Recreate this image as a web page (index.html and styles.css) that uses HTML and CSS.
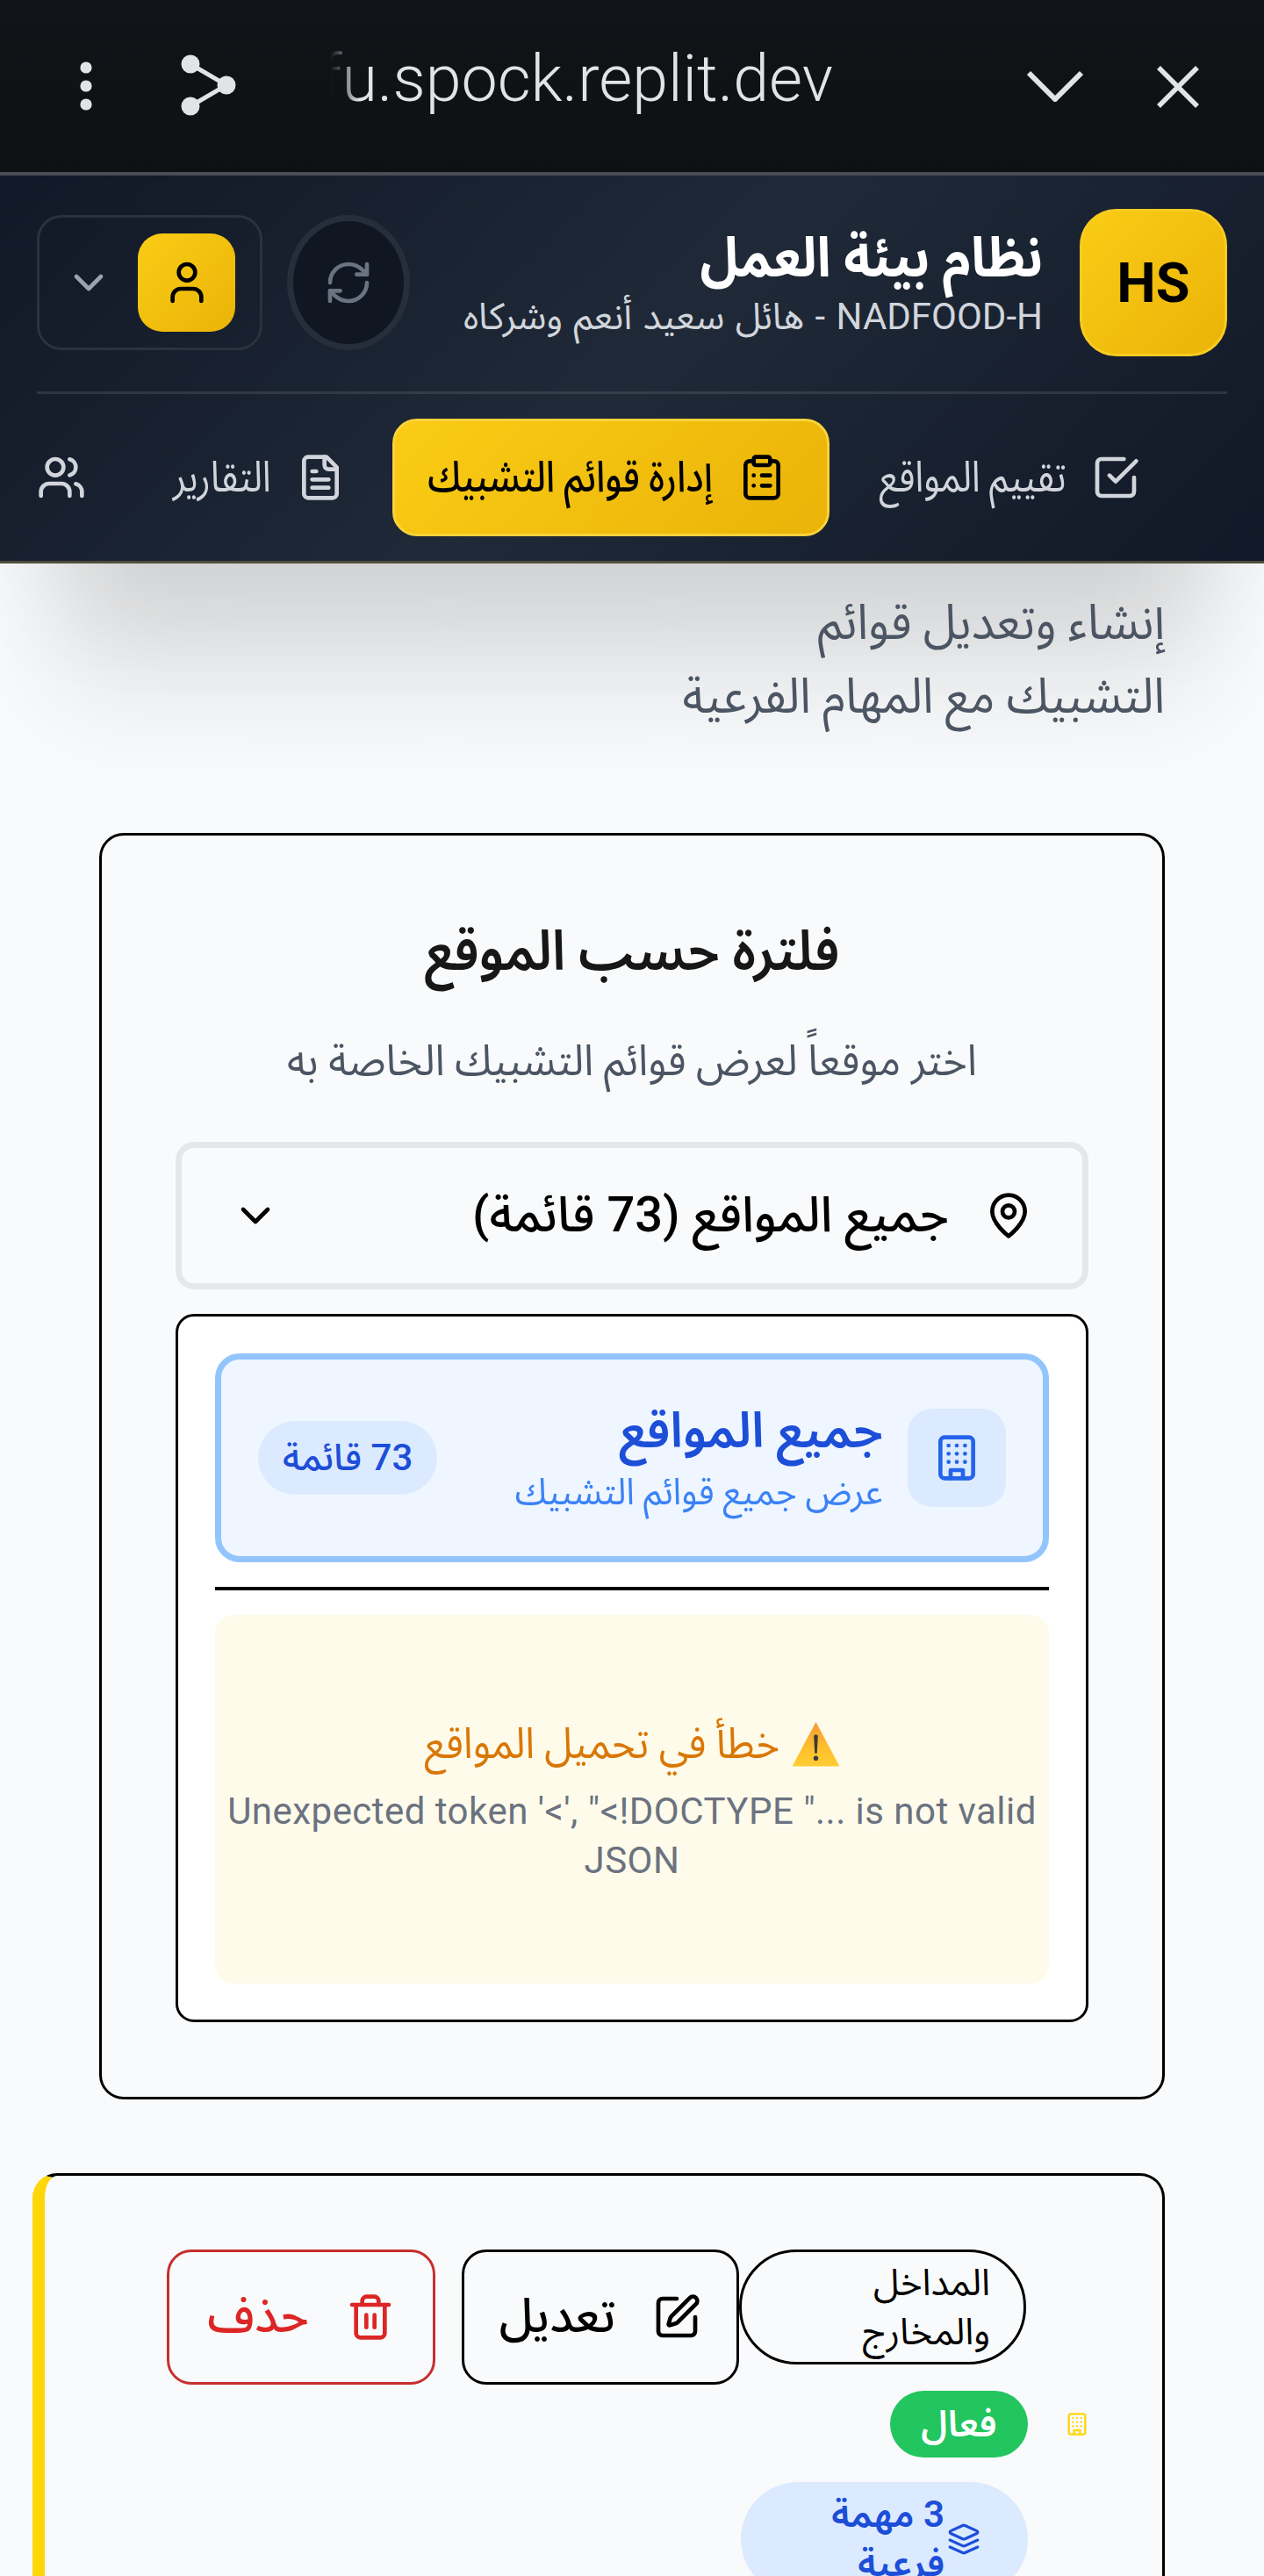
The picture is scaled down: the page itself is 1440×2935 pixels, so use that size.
FILE: index.html
```html
<!DOCTYPE html>
<html lang="ar" dir="rtl">
<head>
<meta charset="utf-8">
<title>نظام بيئة العمل</title>
<link rel="stylesheet" href="styles.css">
</head>
<body>
<div class="browser" dir="ltr">
  <div class="b-left">
    <svg class="kebab" viewBox="0 0 14 56" fill="#e1e3e6"><circle cx="7" cy="7" r="6.6"/><circle cx="7" cy="28" r="6.6"/><circle cx="7" cy="49" r="6.6"/></svg>
    <svg class="share" viewBox="0 0 64 72" fill="#e1e3e6" stroke="#e1e3e6"><line x1="12" y1="12" x2="53" y2="36" stroke-width="5"/><line x1="12" y1="60" x2="53" y2="36" stroke-width="5"/><circle cx="12" cy="12" r="10.5" stroke="none"/><circle cx="53" cy="36" r="10.5" stroke="none"/><circle cx="12" cy="60" r="10.5" stroke="none"/></svg>
    <div class="url"><span>fu.spock.replit.dev</span></div>
  </div>
  <div class="b-right">
    <svg class="b-chev" viewBox="0 0 64 36" fill="none" stroke="#e1e3e6" stroke-width="6"><path d="M2 3l30 30L62 3"/></svg>
    <svg class="b-x" viewBox="0 0 48 48" fill="none" stroke="#e1e3e6" stroke-width="5.5"><path d="M2 2l44 44M46 2L2 46"/></svg>
  </div>
</div>

<header class="hdr">
  <div class="hdr-top">
    <div class="brand">
      <div class="logo">HS</div>
      <div class="brand-text">
        <div class="brand-title">نظام بيئة العمل</div>
        <div class="brand-sub">NADFOOD-H - هائل سعيد أنعم وشركاه</div>
      </div>
    </div>
    <div class="tools">
      <div class="refresh">
        <svg class="ico" viewBox="0 0 24 24"><path d="M3 12a9 9 0 0 1 9-9 9.75 9.75 0 0 1 6.74 2.74L21 8"/><path d="M21 3v5h-5"/><path d="M21 12a9 9 0 0 1-9 9 9.75 9.75 0 0 1-6.74-2.74L3 16"/><path d="M8 16H3v5"/></svg>
      </div>
      <div class="profile">
        <div class="avatar"><svg class="ico" viewBox="0 0 24 24"><path d="M19 21v-2a4 4 0 0 0-4-4H9a4 4 0 0 0-4 4v2"/><circle cx="12" cy="7" r="4"/></svg></div>
        <svg class="ico prof-chev" viewBox="0 0 24 24"><path d="m6 9 6 6 6-6"/></svg>
      </div>
    </div>
  </div>
  <nav class="nav">
    <a class="nav-item w-sites"><svg class="ico" viewBox="0 0 24 24"><polyline points="9 11 12 14 22 4"/><path d="M21 12v7a2 2 0 0 1-2 2H5a2 2 0 0 1-2-2V5a2 2 0 0 1 2-2h11"/></svg><span>تقييم المواقع</span></a>
    <a class="nav-item w-lists active"><svg class="ico" viewBox="0 0 24 24"><rect width="8" height="4" x="8" y="2" rx="1" ry="1"/><path d="M16 4h2a2 2 0 0 1 2 2v14a2 2 0 0 1-2 2H6a2 2 0 0 1-2-2V6a2 2 0 0 1 2-2h2"/><path d="M12 11h4"/><path d="M12 16h4"/><path d="M8 11h.01"/><path d="M8 16h.01"/></svg><span>إدارة قوائم التشبيك</span></a>
    <a class="nav-item w-reports"><svg class="ico" viewBox="0 0 24 24"><path d="M15 2H6a2 2 0 0 0-2 2v16a2 2 0 0 0 2 2h12a2 2 0 0 0 2-2V7Z"/><path d="M14 2v4a2 2 0 0 0 2 2h4"/><path d="M10 9H8"/><path d="M16 13H8"/><path d="M16 17H8"/></svg><span>التقارير</span></a>
    <a class="nav-item"><svg class="ico" viewBox="0 0 24 24"><path d="M16 21v-2a4 4 0 0 0-4-4H6a4 4 0 0 0-4 4v2"/><circle cx="9" cy="7" r="4"/><path d="M22 21v-2a4 4 0 0 0-3-3.87"/><path d="M16 3.13a4 4 0 0 1 0 7.75"/></svg></a>
  </nav>
</header>

<main class="main">
  <p class="lead">إنشاء وتعديل قوائم<br>التشبيك مع المهام الفرعية</p>

  <section class="filter">
    <h2 class="filter-title">فلترة حسب الموقع</h2>
    <p class="filter-sub">اختر موقعاً لعرض قوائم التشبيك الخاصة به</p>
    <div class="select">
      <svg class="ico" viewBox="0 0 24 24"><path d="M20 10c0 6-8 12-8 12s-8-6-8-12a8 8 0 0 1 16 0Z"/><circle cx="12" cy="10" r="3"/></svg>
      <span class="select-text">جميع المواقع (73 قائمة)</span>
      <svg class="ico select-chev" viewBox="0 0 24 24"><path d="m6 9 6 6 6-6"/></svg>
    </div>
    <div class="drop">
      <div class="opt">
        <div class="opt-ico"><svg class="ico" viewBox="0 0 24 24"><rect width="16" height="20" x="4" y="2" rx="2" ry="2"/><path d="M9 22v-4h6v4"/><path d="M8 6h.01"/><path d="M16 6h.01"/><path d="M12 6h.01"/><path d="M12 10h.01"/><path d="M12 14h.01"/><path d="M16 10h.01"/><path d="M16 14h.01"/><path d="M8 10h.01"/><path d="M8 14h.01"/></svg></div>
        <div class="opt-text">
          <div class="opt-title">جميع المواقع</div>
          <div class="opt-sub">عرض جميع قوائم التشبيك</div>
        </div>
        <div class="opt-pill">73 قائمة</div>
      </div>
      <hr class="rule">
      <div class="err">
        <div class="err-title"><svg class="warn" viewBox="0 0 53 48" preserveAspectRatio="none"><defs><linearGradient id="wg" x1="0" y1="0" x2="0" y2="1"><stop offset="0" stop-color="#f59a35"/><stop offset=".6" stop-color="#ffc02c"/><stop offset="1" stop-color="#ffcd33"/></linearGradient></defs><path d="M26.5 1 52 46.500Q52.500 47.500 51 47.500H2Q.5 47.500 1 46.500Z" fill="url(#wg)"/><path d="M26.500 14q2.400 0 2.200 2.500L27.700 34h-2.400L24.300 16.500q-.2-2.500 2.200-2.500Z" fill="#3a3a3a"/><circle cx="26.500" cy="39" r="2.600" fill="#3a3a3a"/></svg><span>خطأ في تحميل المواقع</span></div>
        <div class="err-msg" dir="ltr">Unexpected token '&lt;', "&lt;!DOCTYPE "... is not valid JSON</div>
      </div>
    </div>
  </section>

  <section class="task">
    <div class="task-head">
      <div class="task-name">المداخل والمخارج</div>
      <button class="btn edit"><svg class="ico" viewBox="0 0 24 24"><path d="M12 3H5a2 2 0 0 0-2 2v14a2 2 0 0 0 2 2h14a2 2 0 0 0 2-2v-7"/><path d="M18.375 2.625a1 1 0 0 1 3 3l-9.013 9.014a2 2 0 0 1-.853.505l-2.873.84a.5.5 0 0 1-.62-.62l.84-2.873a2 2 0 0 1 .506-.852z"/></svg><span>تعديل</span></button>
      <button class="btn danger"><svg class="ico" viewBox="0 0 24 24"><path d="M3 6h18"/><path d="M19 6v14c0 1-1 2-2 2H7c-1 0-2-1-2-2V6"/><path d="M8 6V4c0-1 1-2 2-2h4c1 0 2 1 2 2v2"/><line x1="10" x2="10" y1="11" y2="17"/><line x1="14" x2="14" y1="11" y2="17"/></svg><span>حذف</span></button>
    </div>
    <div class="task-status">
      <svg class="ico tiny" viewBox="0 0 24 24"><rect width="16" height="20" x="4" y="2" rx="2" ry="2"/><path d="M9 22v-4h6v4"/><path d="M8 6h.01"/><path d="M16 6h.01"/><path d="M12 6h.01"/><path d="M12 10h.01"/><path d="M12 14h.01"/><path d="M16 10h.01"/><path d="M16 14h.01"/><path d="M8 10h.01"/><path d="M8 14h.01"/></svg>
      <span class="active-pill">فعال</span>
    </div>
    <div class="sub-pill">
      <svg class="ico layers" viewBox="0 0 24 24"><path d="m12.830 2.180a2 2 0 0 0-1.660 0L2.600 6.080a1 1 0 0 0 0 1.830l8.580 3.910a2 2 0 0 0 1.660 0l8.580-3.900a1 1 0 0 0 0-1.830Z"/><path d="m22 17.650-9.170 4.160a2 2 0 0 1-1.660 0L2 17.650"/><path d="m22 12.650-9.170 4.160a2 2 0 0 1-1.660 0L2 12.650"/></svg>
      <span>3 مهمة فرعية</span>
    </div>
  </section>
</main>
</body>
</html>
```
FILE: styles.css
```css
* { box-sizing: border-box; }
html, body { margin: 0; height: 2935px; overflow: hidden; }
body { background: #f9fafb; font-family: Roboto, "Noto Sans Arabic", "Noto Sans", sans-serif; color: #000; }
p, h2 { margin: 0; }

.ico { width: 56px; height: 56px; fill: none; stroke: currentColor; stroke-width: 2; stroke-linecap: round; stroke-linejoin: round; flex: none; display: block; }

/* browser bar */
.browser { height: 200px; background: linear-gradient(#111418, #0e1013); border-bottom: 4px solid #4a4d52; display: flex; justify-content: space-between; align-items: flex-start; }
.b-left { display: flex; align-items: flex-start; padding-left: 91px; }
.kebab { width: 14px; height: 56px; margin-top: 70px; }
.share { width: 64px; height: 72px; margin: 61px 0 0 100px; }
.url { width: 640px; margin: 44px 0 0 40px; height: 92px; overflow: hidden; text-align: right; font: 300 73.5px/92px Roboto, sans-serif; color: #e1e3e6; white-space: nowrap; -webkit-mask-image: linear-gradient(to right, transparent 68px, #000 100px); mask-image: linear-gradient(to right, transparent 68px, #000 100px); }
.b-right { display: flex; align-items: flex-start; padding-right: 74px; }
.b-chev { width: 64px; height: 36px; margin-top: 80px; }
.b-x { width: 48px; height: 48px; margin: 75px 0 0 84px; }

/* header */
.hdr { background: linear-gradient(135deg, #111827 0%, #1f2937 50%, #111827 100%); border-bottom: 3px solid #4f4e3c; padding: 38px 42px 0; height: 442px; box-shadow: 0 103px 130px -65px rgba(0,0,0,.1), 0 213px 130px -65px rgba(0,0,0,.09); position: relative; }
.hdr-top { display: flex; justify-content: space-between; align-items: flex-start; height: 211px; border-bottom: 3.5px solid rgba(255,255,255,.1); }
.brand { display: flex; gap: 42px; align-items: flex-start; }
.logo { width: 168px; height: 168px; border-radius: 42px; background: linear-gradient(135deg, #facc15, #eab308); border: 3.5px solid #f8cb20; display: flex; align-items: center; justify-content: center; font: 700 63px/1 Roboto, sans-serif; color: #000; }
.brand-text { padding-top: 14px; }
.brand-title { font-size: 63px; line-height: 84px; font-weight: 700; color: #fff; transform: scaleX(.933); transform-origin: right; }
.brand-sub { font-size: 42px; line-height: 50px; color: #d1d5db; word-spacing: 2px; }
.tools { display: flex; gap: 28px; padding-top: 7px; }
.refresh { width: 140px; height: 154px; border-radius: 50%; background: #111722; border: 7px solid #262e3b; display: flex; align-items: center; justify-content: center; color: #6b7280; }
.profile { width: 257px; height: 154px; border: 3.5px solid #2a323f; border-radius: 28px; display: flex; align-items: center; padding: 0 28px; gap: 28px; }
.avatar { width: 112px; height: 112px; border-radius: 28px; background: linear-gradient(135deg, #facc15, #eab308); display: flex; align-items: center; justify-content: center; color: #000; }
.prof-chev { color: #9ca3af; }

.nav { display: flex; margin: 28px 0 0; gap: 5px; overflow: hidden; padding-right: 50px; }
.nav-item { flex: none; height: 134px; padding: 0 46px; display: flex; gap: 28px; align-items: center; font-size: 49px; color: #d1d5db; border-radius: 28px; border: 3.5px solid transparent; white-space: nowrap; }
.nav-item span { flex: none; display: block; transform: scaleX(.85); transform-origin: right; }
.w-sites { width: 398px; }
.w-lists { width: 498px; }
.w-reports { width: 290px; }
.nav-item.active { background: linear-gradient(135deg, #facc15, #eab308); border-color: #f9d23c; color: #000; font-weight: 500; }

/* main */
.main { padding: 27px 113px 0 113px; }
.lead { font-size: 56px; line-height: 84px; color: #4b5563; margin-bottom: 114px; margin-top: -2px; transform: scaleX(.958); transform-origin: right; }

.filter { border: 3.5px solid #000; border-radius: 28px; padding: 84px; height: 1443px; }
.filter-title { font-size: 63px; line-height: 84px; font-weight: 600; text-align: center; color: #171717; padding-top: 6px; transform: scaleX(.947); }
.filter-sub { font-size: 49px; line-height: 70px; text-align: center; color: #4b5563; margin-top: 48px; transform: scaleX(.96); }
.select { height: 168px; margin-top: 57px; border: 7px solid #e5e7eb; border-radius: 21px; display: flex; align-items: center; gap: 40px; padding: 0 56px; font-size: 56px; font-weight: 500; }
.select-text { flex: 1; }
.select-chev { color: #000; margin-right: -12px; }
.drop { margin-top: 28px; background: #fff; border: 3.5px solid #000; border-radius: 21px; padding: 42px; height: 807px; }
.opt { height: 238px; border: 7px solid #93c5fd; border-radius: 28px; background: #eff6ff; display: flex; align-items: center; padding: 0 42px; gap: 28px; }
.opt-ico { width: 112px; height: 112px; border-radius: 28px; background: #dbeafe; color: #2563eb; display: flex; align-items: center; justify-content: center; flex: none; }
.opt-text { flex: 1; }
.opt-title { font-size: 56px; line-height: 70px; font-weight: 600; color: #1d4ed8; }
.opt-sub { font-size: 42px; line-height: 56px; color: #3b82f6; margin-top: 7px; transform: scaleX(.965); transform-origin: right; }
.opt-pill { height: 84px; padding: 0 28px; border-radius: 42px; background: #dbeafe; color: #1d4ed8; font-size: 42px; font-weight: 500; display: flex; align-items: center; letter-spacing: .5px; }
.rule { border: 0; height: 3.5px; background: #000; margin: 28px 0; }
.err { height: 420px; border-radius: 21px; background: #fefbea; padding: 112px 0; text-align: center; }
.err-title { display: flex; justify-content: center; align-items: center; gap: 14px; font-size: 49px; line-height: 70px; color: #d97706; }
.err-title span { display: block; transform: scaleX(.928); transform-origin: right; margin-left: -31px; }
.warn { width: 55px; height: 52px; flex: none; }
.err-msg { font: 400 42px/56px Roboto, sans-serif; color: #6b7280; margin-top: 14px; letter-spacing: .47px; }

.task { margin: 84px 0 0 -76px; border: 3.5px solid #000; border-left: 14px solid #ffd60a; border-radius: 28px; padding: 84px 153px 0 0; height: 600px; }
.task-head { display: flex; align-items: flex-start; gap: 0; }
.task-name { width: 327px; height: 131px; margin-right: 2px; border: 3.5px solid #000; border-radius: 65px; font-size: 42px; line-height: 56px; padding: 7px 38px 0 0; }
.btn { height: 154px; padding: 0; display: flex; align-items: center; justify-content: center; gap: 42px; background: transparent; border: 3.5px solid #000; border-radius: 28px; font: inherit; font-size: 54px; font-weight: 500; color: #000; }
.btn.edit { width: 316px; }
.btn.danger { width: 306px; margin-right: 30px; color: #dc2626; border-color: #c62f2f; }
.task-status { display: flex; align-items: center; margin: 7px -70px 0 0; gap: 42px; }
.tiny { width: 28px; height: 28px; color: #ffd60a; }
.active-pill { width: 157px; height: 76px; border-radius: 38px; background: #22c55e; color: #fff; font-size: 42px; font-weight: 600; display: flex; align-items: center; justify-content: center; }
.sub-pill { width: 327px; height: 130px; margin-top: 28px; border-radius: 65px; background: #dbeafe; color: #1d4ed8; font-size: 42px; line-height: 56px; font-weight: 600; display: flex; align-items: center; gap: 3px; padding: 0 54px; }
.layers { width: 38px; height: 38px; }
```
